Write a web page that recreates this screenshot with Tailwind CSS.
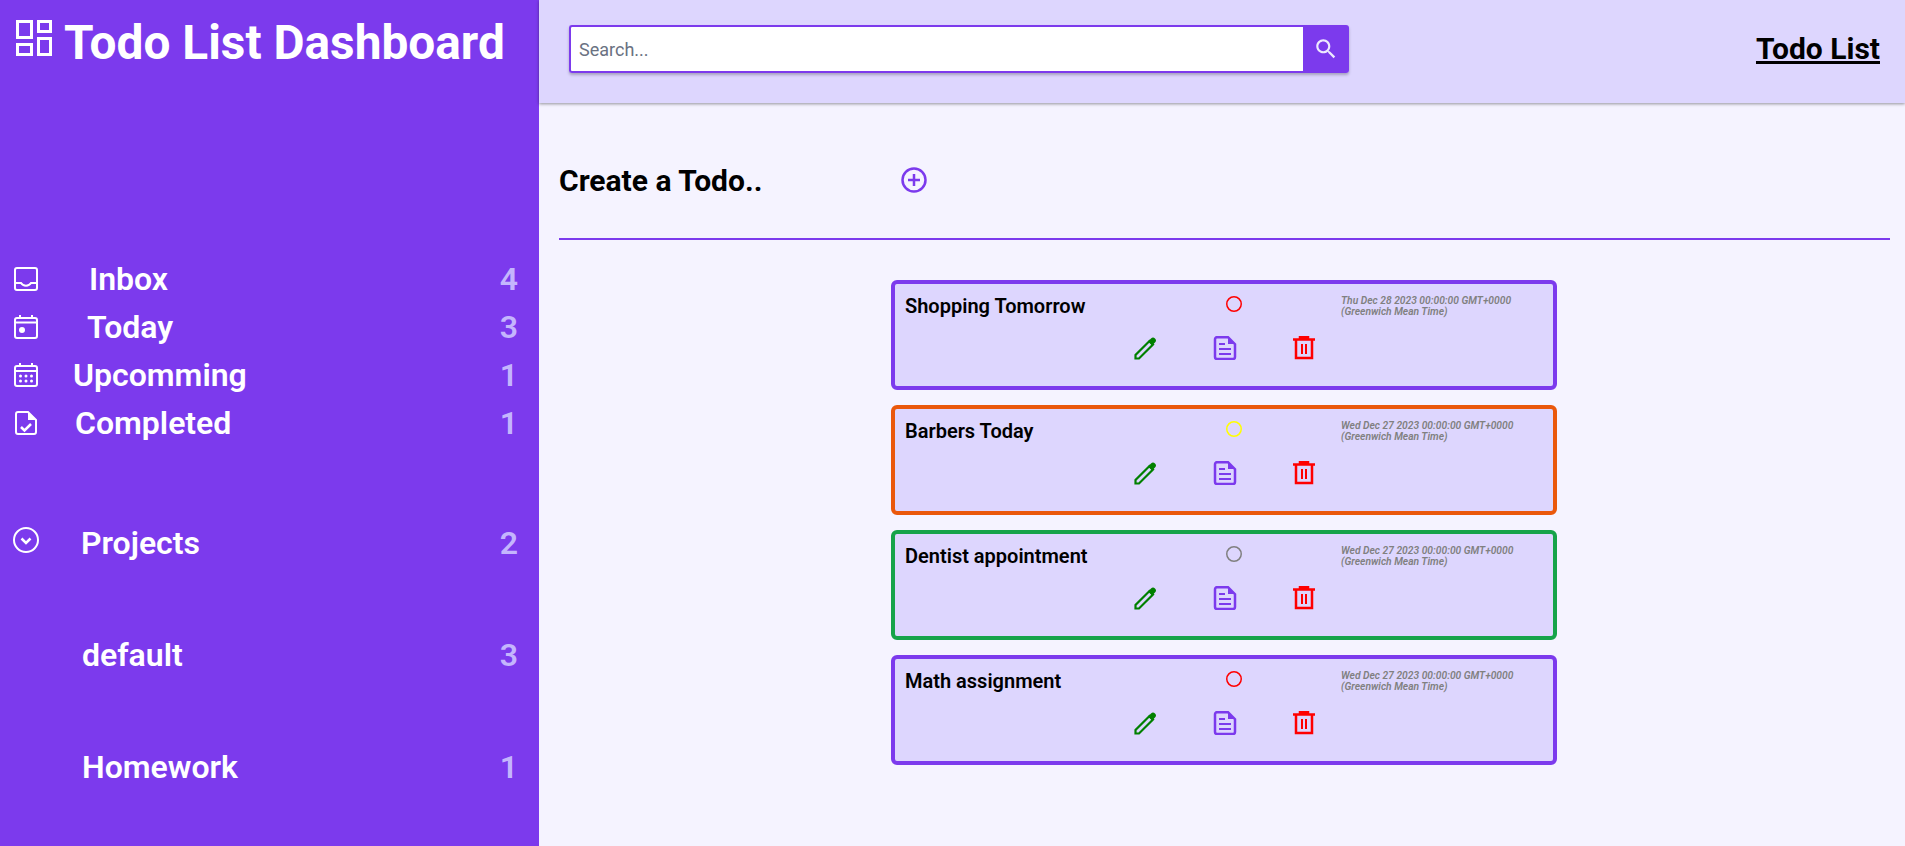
<!DOCTYPE html>
<html>
<head>
    <title>Todo List Dashboard</title>
    <script src="https://cdn.jsdelivr.net/npm/@tailwindcss/browser@4"></script>
</head>
<body class="bg-[#f5f3ff] font-['Roboto',sans-serif] overflow-hidden">
    <div class="flex h-[846px]">
        <!-- sidebar -->
        <aside class="w-[539px] shrink-0 bg-[#7c3aed] text-white">
            <div class="flex items-start pl-4 pt-5 h-[261px]">
                <svg class="w-9 h-9 shrink-0" viewBox="0 0 36 36" fill="none" stroke="currentColor" stroke-width="3"><rect x="1.500" y="1.500" width="14" height="16"/><rect x="22.500" y="1.500" width="12" height="10"/><rect x="1.500" y="24.500" width="14" height="10"/><rect x="22.500" y="18.500" width="12" height="16"/></svg>
                <h1 class="ml-3 -mt-px text-[47.800px] leading-[48px] font-bold">Todo List Dashboard</h1>
            </div>

            <div class="flex flex-col gap-3 pl-[14px] pr-[21px]">
                <div class="flex items-center h-9 text-[32px] font-semibold">
                    <svg class="w-6 h-6 shrink-0" viewBox="0 0 24 24" fill="none" stroke="currentColor" stroke-width="2"><rect x="1" y="1" width="22" height="22" rx="2"/><path d="M1 16h6c2 3.500 8 3.500 10 0h6"/></svg>
                    <span class="ml-[51px]">Inbox</span>
                    <span class="ml-auto text-[#c4b5fd]">4</span>
                </div>
                <div class="flex items-center h-9 text-[32px] font-semibold">
                    <svg class="w-6 h-6 shrink-0" viewBox="0 0 24 24" fill="none" stroke="currentColor" stroke-width="2"><rect x="1" y="3" width="22" height="20" rx="2"/><path d="M1 7.500h22M6 0v3M18 0v3"/><circle cx="8" cy="15" r="3" fill="currentColor" stroke="none"/></svg>
                    <span class="ml-[49px]">Today</span>
                    <span class="ml-auto text-[#c4b5fd]">3</span>
                </div>
                <div class="flex items-center h-9 text-[32px] font-semibold">
                    <svg class="w-6 h-6 shrink-0" viewBox="0 0 24 24" fill="none" stroke="currentColor" stroke-width="2"><rect x="1" y="3" width="22" height="20" rx="2"/><path d="M1 8h22M6 0v3M18 0v3"/><g fill="currentColor" stroke="none"><circle cx="6.500" cy="13" r="1.500"/><circle cx="12" cy="13" r="1.500"/><circle cx="17.500" cy="13" r="1.500"/><circle cx="6.500" cy="18" r="1.500"/><circle cx="12" cy="18" r="1.500"/><circle cx="17.500" cy="18" r="1.500"/></g></svg>
                    <span class="ml-[35px]">Upcomming</span>
                    <span class="ml-auto text-[#c4b5fd]">1</span>
                </div>
                <div class="flex items-center h-9 text-[32px] font-semibold">
                    <svg class="w-6 h-6 shrink-0" viewBox="0 0 24 24" fill="none" stroke="currentColor" stroke-width="2"><path d="M4 1h10l8 8v12a2 2 0 0 1-2 2H4a2 2 0 0 1-2-2V3a2 2 0 0 1 2-2z"/><path d="M14 1v8h8" fill="currentColor" stroke="none"/><path d="M7 16l3.500 3.500L17 13" stroke-width="2.500"/></svg>
                    <span class="ml-[37px]">Completed</span>
                    <span class="ml-auto text-[#c4b5fd]">1</span>
                </div>

                <div class="flex items-center h-9 mt-[72px] text-[32px] font-semibold">
                    <svg class="w-[26px] h-[26px] shrink-0 -ml-px -mt-[6px]" viewBox="0 0 26 26" fill="none" stroke="currentColor" stroke-width="2"><circle cx="13" cy="13" r="12"/><path d="M8.500 11.500L13 16l4.500-4.500" stroke-width="2.500"/></svg>
                    <span class="ml-[42px]">Projects</span>
                    <span class="ml-auto text-[#c4b5fd]">2</span>
                </div>
                <div class="flex items-center h-9 mt-[64px] pl-[68px] text-[32px] font-semibold">
                    <span>default</span>
                    <span class="ml-auto text-[#c4b5fd]">3</span>
                </div>
                <div class="flex items-center h-9 mt-[64px] pl-[68px] text-[32px] font-semibold">
                    <span>Homework</span>
                    <span class="ml-auto text-[#c4b5fd]">1</span>
                </div>
            </div>
        </aside>

        <main class="flex-1 min-w-0">
            <!-- top bar -->
            <header class="flex items-center justify-between h-[103px] pb-[5px] pl-[30px] pr-[25px] bg-[#ddd6fe] shadow-[0_1px_3px_rgba(0,0,0,0.4)]">
                <div class="flex h-12 w-[780px] rounded-[3px] shadow-[0_2px_3px_rgba(0,0,0,0.25)]">
                    <input type="text" placeholder="Search..." class="flex-1 min-w-0 h-12 px-2 text-lg bg-white border-2 border-[#7c3aed] border-r-0 rounded-l-[3px] outline-none placeholder:text-gray-500">
                    <button class="flex items-center justify-center w-[46px] h-12 bg-[#7c3aed] rounded-r-[3px]">
                        <svg class="w-[26px] h-[26px]" viewBox="0 0 24 24" fill="#ede9fe"><path d="M15.500 14h-.79l-.28-.27C15.410 12.590 16 11.110 16 9.500 16 5.910 13.090 3 9.500 3S3 5.910 3 9.500 5.910 16 9.500 16c1.610 0 3.090-.59 4.230-1.570l.27.28v.79l5 4.990L20.490 19l-4.990-5zm-6 0C7.010 14 5 11.990 5 9.500S7.010 5 9.500 5 14 7.010 14 9.500 11.990 14 9.500 14z"/></svg>
                    </button>
                </div>
                <a href="#" class="text-3xl font-bold text-black underline">Todo List</a>
            </header>

            <div class="pl-5 pr-[15px]">
                <div class="flex items-center h-[137px] pt-5 border-b-2 border-[#7c3aed]">
                    <h2 class="w-[342px] text-3xl font-bold text-black">Create a Todo..</h2>
                    <svg class="w-[26px] h-[26px] -mt-[2px]" viewBox="0 0 26 26" fill="none" stroke="#7c3aed" stroke-width="2.500"><circle cx="13" cy="13" r="11.500"/><path d="M13 7v12M7 13h12"/></svg>
                </div>

                <div id="todos" class="flex flex-col gap-[15px] w-[666px] ml-[332px] mt-10">
                    <div class="h-[110px] px-[10px] pt-2 border-4 border-[#7c3aed] rounded-md bg-[#ddd6fe]">
                        <div class="flex items-start">
                            <p class="w-[321px] text-xl leading-7 font-semibold text-black">Shopping Tomorrow</p>
                            <svg class="w-4 h-4 mt-1" viewBox="0 0 16 16" fill="none" stroke="#ff0000" stroke-width="1.500"><circle cx="8" cy="8" r="7.250"/></svg>
                            <p class="w-[190px] ml-[99px] mt-[3px] text-[10.250px] leading-[11px] italic font-semibold text-[#808080]">Thu Dec 28 2023 00:00:00 GMT+0000 (Greenwich Mean Time)</p>
                        </div>
                        <div class="flex mt-4 ml-[229px] gap-[55px]">
                            <svg class="w-6 h-6" viewBox="0 0 24 24"><path d="M1.500 22.500V19L15.500 5 19 8.500 5 22.500z" fill="none" stroke="#008000" stroke-width="2.200"/><path d="M14 5.500l3-3a2.800 2.800 0 0 1 4 4l-3 3z" fill="#008000"/></svg>
                            <svg class="w-6 h-6" viewBox="0 0 24 24" fill="none" stroke="#7c3aed" stroke-width="2.500"><path d="M4 1.200h11l7 7V21a2 2 0 0 1-2 2H4a2 2 0 0 1-2-2V3.200a2 2 0 0 1 2-2z"/><path d="M15 1v7h7" fill="#7c3aed" stroke="none"/><path d="M6 8h6M6 13h12M6 18h12" stroke-width="2"/></svg>
                            <svg class="w-6 h-6" viewBox="0 0 24 24" fill="none" stroke="#ff0000" stroke-width="2.500"><path d="M1 3.500h22M8 2.500V1h8v1.500"/><path d="M4 4v18h16V4"/><path d="M10 8v10M14 8v10" stroke-width="2"/></svg>
                        </div>
                    </div>

                    <div class="h-[110px] px-[10px] pt-2 border-4 border-[#ea580c] rounded-md bg-[#ddd6fe]">
                        <div class="flex items-start">
                            <p class="w-[321px] text-xl leading-7 font-semibold text-black">Barbers Today</p>
                            <svg class="w-4 h-4 mt-1" viewBox="0 0 16 16" fill="none" stroke="#ffff00" stroke-width="1.500"><circle cx="8" cy="8" r="7.250"/></svg>
                            <p class="w-[190px] ml-[99px] mt-[3px] text-[10.250px] leading-[11px] italic font-semibold text-[#808080]">Wed Dec 27 2023 00:00:00 GMT+0000 (Greenwich Mean Time)</p>
                        </div>
                        <div class="flex mt-4 ml-[229px] gap-[55px]">
                            <svg class="w-6 h-6" viewBox="0 0 24 24"><path d="M1.500 22.500V19L15.500 5 19 8.500 5 22.500z" fill="none" stroke="#008000" stroke-width="2.200"/><path d="M14 5.500l3-3a2.800 2.800 0 0 1 4 4l-3 3z" fill="#008000"/></svg>
                            <svg class="w-6 h-6" viewBox="0 0 24 24" fill="none" stroke="#7c3aed" stroke-width="2.500"><path d="M4 1.200h11l7 7V21a2 2 0 0 1-2 2H4a2 2 0 0 1-2-2V3.200a2 2 0 0 1 2-2z"/><path d="M15 1v7h7" fill="#7c3aed" stroke="none"/><path d="M6 8h6M6 13h12M6 18h12" stroke-width="2"/></svg>
                            <svg class="w-6 h-6" viewBox="0 0 24 24" fill="none" stroke="#ff0000" stroke-width="2.500"><path d="M1 3.500h22M8 2.500V1h8v1.500"/><path d="M4 4v18h16V4"/><path d="M10 8v10M14 8v10" stroke-width="2"/></svg>
                        </div>
                    </div>

                    <div class="h-[110px] px-[10px] pt-2 border-4 border-[#16a34a] rounded-md bg-[#ddd6fe]">
                        <div class="flex items-start">
                            <p class="w-[321px] text-xl leading-7 font-semibold text-black">Dentist appointment</p>
                            <svg class="w-4 h-4 mt-1" viewBox="0 0 16 16" fill="none" stroke="#808080" stroke-width="1.500"><circle cx="8" cy="8" r="7.250"/></svg>
                            <p class="w-[190px] ml-[99px] mt-[3px] text-[10.250px] leading-[11px] italic font-semibold text-[#808080]">Wed Dec 27 2023 00:00:00 GMT+0000 (Greenwich Mean Time)</p>
                        </div>
                        <div class="flex mt-4 ml-[229px] gap-[55px]">
                            <svg class="w-6 h-6" viewBox="0 0 24 24"><path d="M1.500 22.500V19L15.500 5 19 8.500 5 22.500z" fill="none" stroke="#008000" stroke-width="2.200"/><path d="M14 5.500l3-3a2.800 2.800 0 0 1 4 4l-3 3z" fill="#008000"/></svg>
                            <svg class="w-6 h-6" viewBox="0 0 24 24" fill="none" stroke="#7c3aed" stroke-width="2.500"><path d="M4 1.200h11l7 7V21a2 2 0 0 1-2 2H4a2 2 0 0 1-2-2V3.200a2 2 0 0 1 2-2z"/><path d="M15 1v7h7" fill="#7c3aed" stroke="none"/><path d="M6 8h6M6 13h12M6 18h12" stroke-width="2"/></svg>
                            <svg class="w-6 h-6" viewBox="0 0 24 24" fill="none" stroke="#ff0000" stroke-width="2.500"><path d="M1 3.500h22M8 2.500V1h8v1.500"/><path d="M4 4v18h16V4"/><path d="M10 8v10M14 8v10" stroke-width="2"/></svg>
                        </div>
                    </div>

                    <div class="h-[110px] px-[10px] pt-2 border-4 border-[#7c3aed] rounded-md bg-[#ddd6fe]">
                        <div class="flex items-start">
                            <p class="w-[321px] text-xl leading-7 font-semibold text-black">Math assignment</p>
                            <svg class="w-4 h-4 mt-1" viewBox="0 0 16 16" fill="none" stroke="#ff0000" stroke-width="1.500"><circle cx="8" cy="8" r="7.250"/></svg>
                            <p class="w-[190px] ml-[99px] mt-[3px] text-[10.250px] leading-[11px] italic font-semibold text-[#808080]">Wed Dec 27 2023 00:00:00 GMT+0000 (Greenwich Mean Time)</p>
                        </div>
                        <div class="flex mt-4 ml-[229px] gap-[55px]">
                            <svg class="w-6 h-6" viewBox="0 0 24 24"><path d="M1.500 22.500V19L15.500 5 19 8.500 5 22.500z" fill="none" stroke="#008000" stroke-width="2.200"/><path d="M14 5.500l3-3a2.800 2.800 0 0 1 4 4l-3 3z" fill="#008000"/></svg>
                            <svg class="w-6 h-6" viewBox="0 0 24 24" fill="none" stroke="#7c3aed" stroke-width="2.500"><path d="M4 1.200h11l7 7V21a2 2 0 0 1-2 2H4a2 2 0 0 1-2-2V3.200a2 2 0 0 1 2-2z"/><path d="M15 1v7h7" fill="#7c3aed" stroke="none"/><path d="M6 8h6M6 13h12M6 18h12" stroke-width="2"/></svg>
                            <svg class="w-6 h-6" viewBox="0 0 24 24" fill="none" stroke="#ff0000" stroke-width="2.500"><path d="M1 3.500h22M8 2.500V1h8v1.500"/><path d="M4 4v18h16V4"/><path d="M10 8v10M14 8v10" stroke-width="2"/></svg>
                        </div>
                    </div>
                </div>
            </div>
        </main>
    </div>
</body>
</html>
